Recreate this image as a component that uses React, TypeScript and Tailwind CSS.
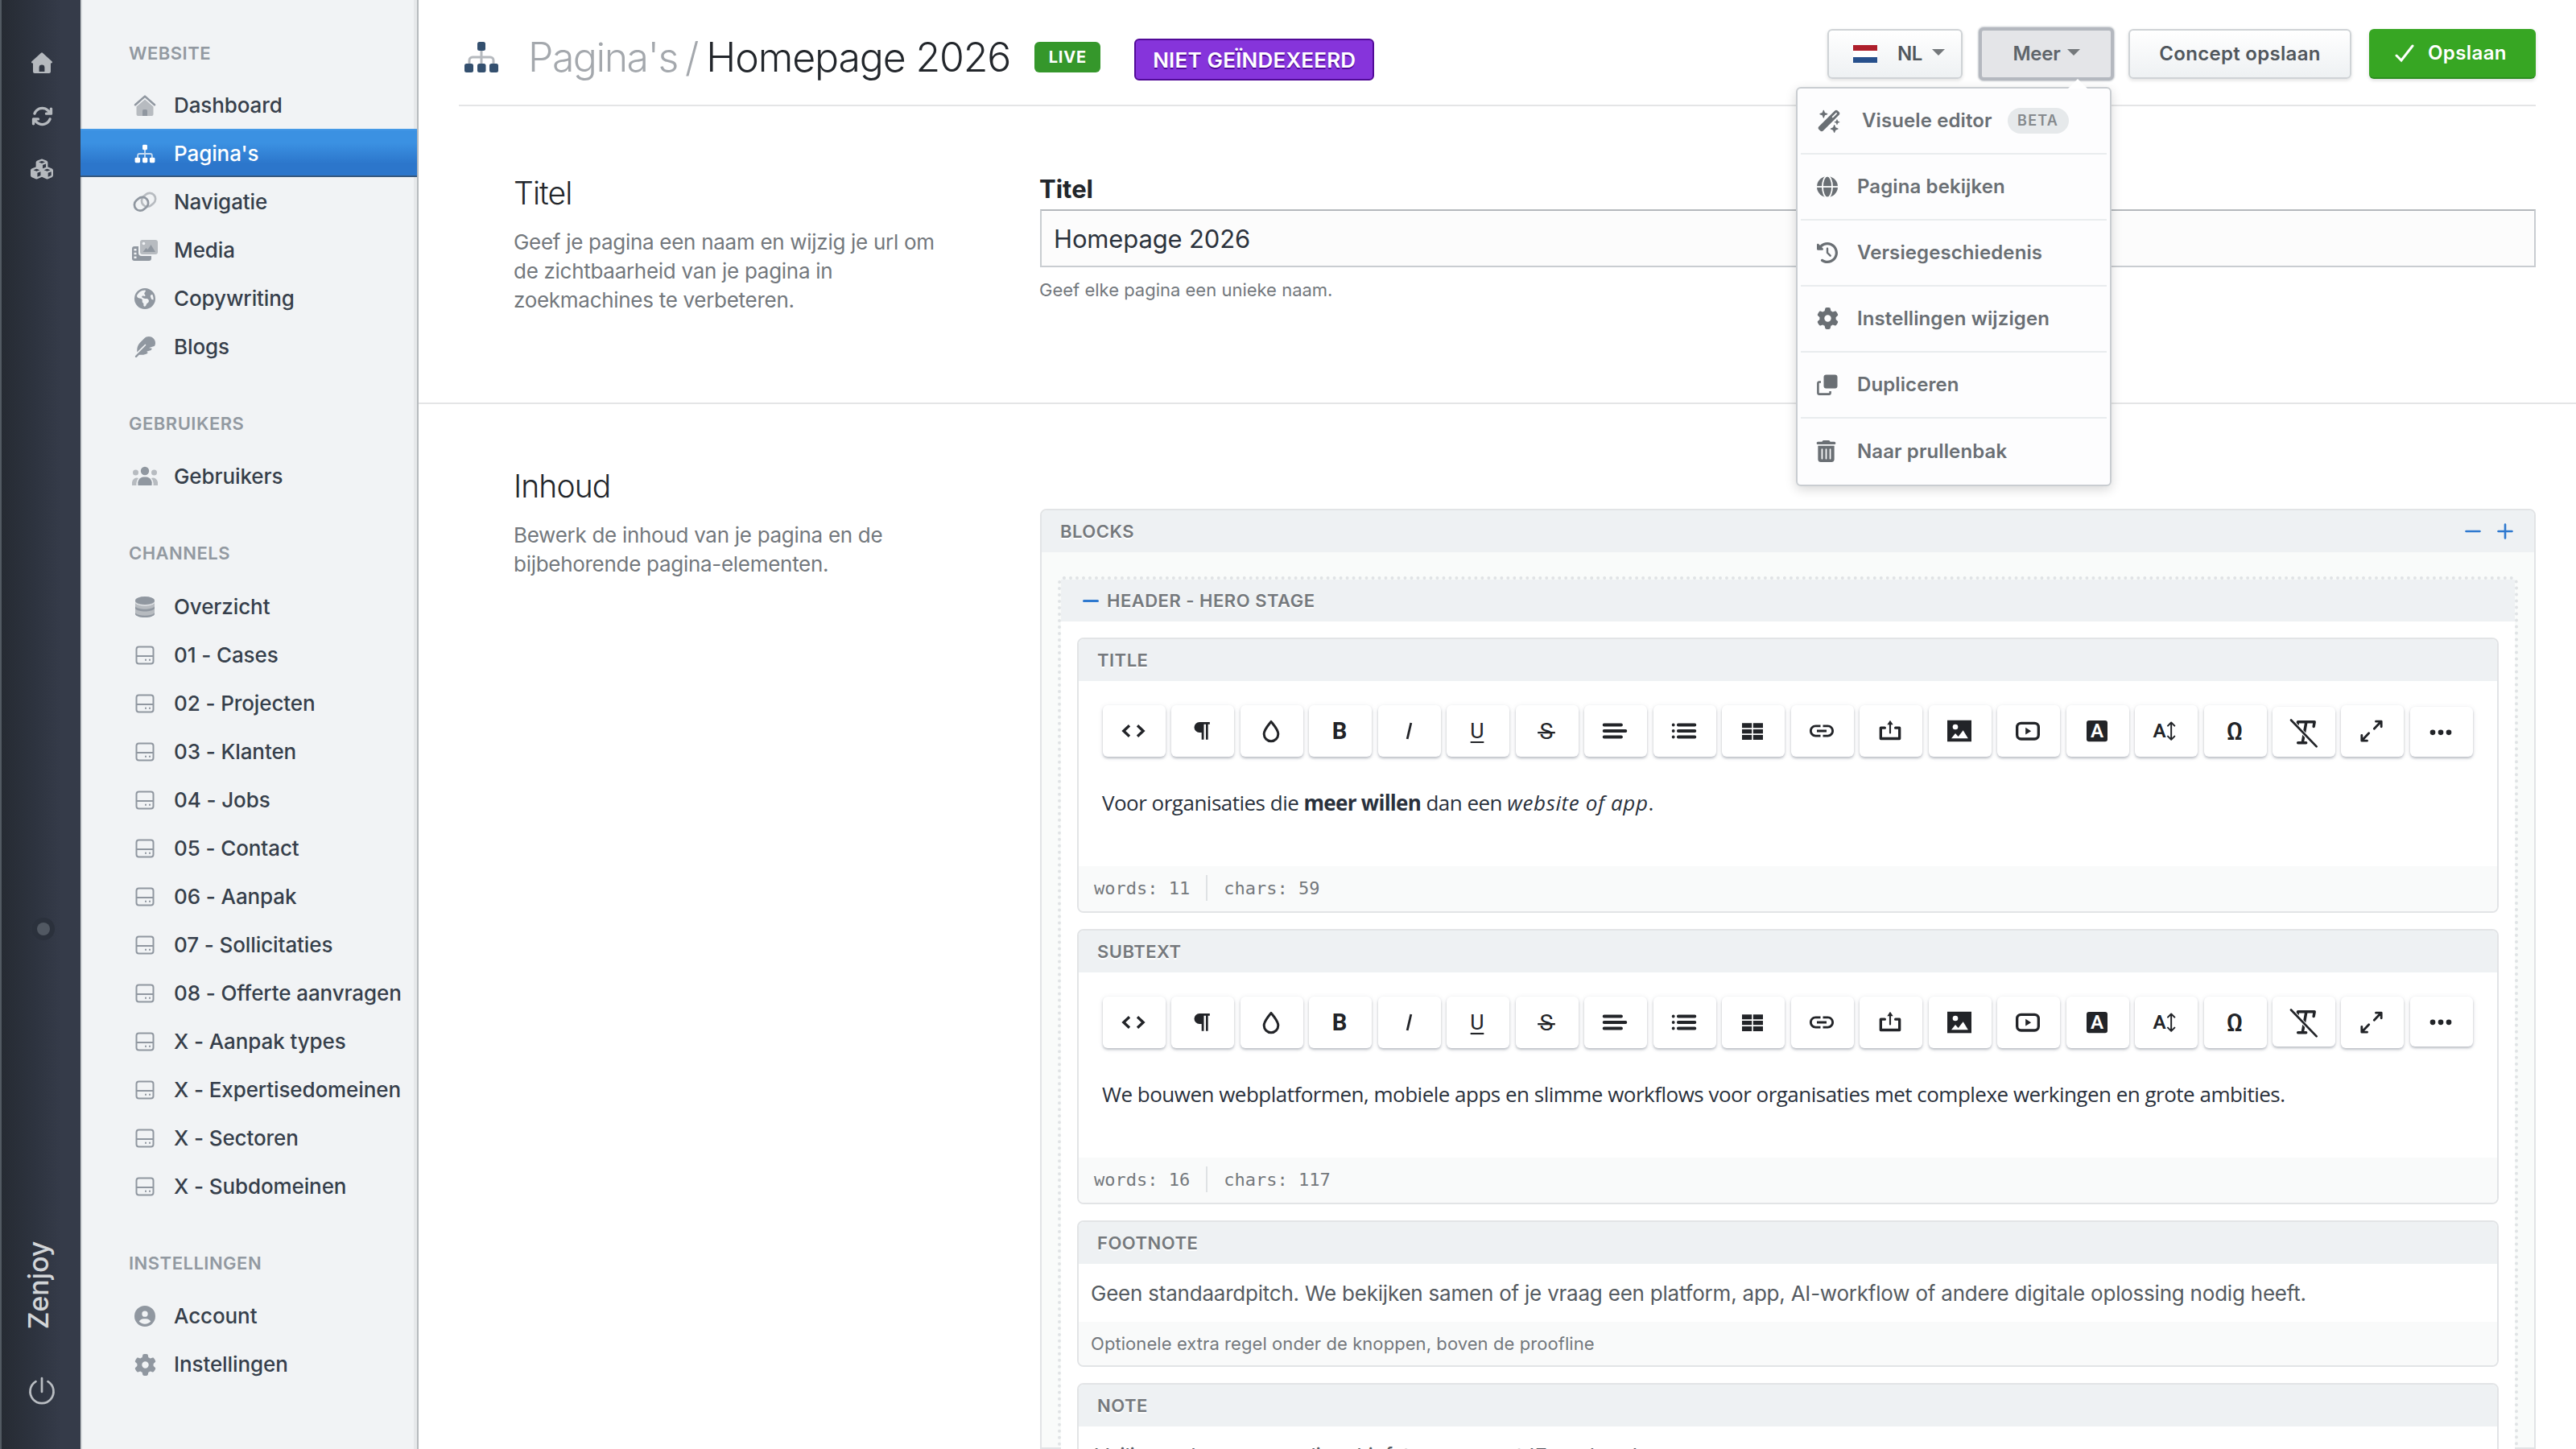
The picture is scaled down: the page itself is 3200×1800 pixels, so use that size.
import React from 'react';
import {
    FaArrowsRotate,
    FaCircleUser,
    FaClockRotateLeft,
    FaCubes,
    FaEarthAmericas,
    FaFeather,
    FaGear,
    FaTrashCan,
    FaWandMagicSparkles,
} from 'react-icons/fa6';
import { MdLink } from 'react-icons/md';

interface NavItem {
    label: string;
    icon: React.ReactElement;
    active?: boolean;
}

interface NavSection {
    title: string;
    items: NavItem[];
}

// ---------- Sidebar icons ----------

const HouseIcon: React.FC = () => (
    <svg viewBox="0 0 28 28" className="size-7" fill="none">
        <path d="M14 6.500 24.500 15.600V25a2 2 0 0 1-2 2h-17a2 2 0 0 1-2-2v-9.400z" fill="#b7bbc0" />
        <path d="M2 13.200 14 2.600l12 10.600" stroke="#9097a0" strokeWidth="2.600" strokeLinecap="round" strokeLinejoin="round" />
        <path d="M11 27v-6.500a1.500 1.500 0 0 1 1.500-1.500h3a1.500 1.500 0 0 1 1.500 1.500V27z" fill="#9097a0" />
    </svg>
);

const SitemapIcon: React.FC<{ className: string; box: string; line: string }> = ({ className, box, line }) => (
    <svg viewBox="0 0 44 40" className={className} fill="none">
        <path d="M22 10v18M7 29v-5a4 4 0 0 1 4-4h22a4 4 0 0 1 4 4v5" stroke={line} strokeWidth="3" />
        <rect x="17" y="1" width="10" height="11" rx="2.500" fill={box} />
        <rect x="1" y="28" width="11" height="11" rx="2.500" fill={box} />
        <rect x="17" y="28" width="10.500" height="11" rx="2.500" fill={box} />
        <rect x="32" y="28" width="11" height="11" rx="2.500" fill={box} />
    </svg>
);

const RingsIcon: React.FC = () => (
    <svg viewBox="0 0 30 26" className="h-[26px] w-[30px]" fill="none" strokeWidth="2.700">
        <rect x="10.500" y="3" width="18" height="14.500" rx="7.200" transform="rotate(-42 19.500 10.200)" stroke="#b7bbc0" />
        <rect x="1.500" y="8" width="18" height="14.500" rx="7.200" transform="rotate(-42 10.500 15.200)" stroke="#9097a0" />
    </svg>
);

const MediaIcon: React.FC = () => (
    <svg viewBox="0 0 34 28" className="h-7 w-[34px]">
        <path d="M4 9h5v8a4 4 0 0 0 4 4h12v3a3 3 0 0 1-3 3H4a3 3 0 0 1-3-3V12a3 3 0 0 1 3-3z" fill="#9097a0" />
        <path d="M3.500 12h3v2.500h-3zM3.500 16.800h3v2.500h-3zM3.500 21.500h3V24h-3z" fill="#f1f3f5" />
        <rect x="11" y="1" width="22" height="18" rx="3" fill="#b7bbc0" />
        <circle cx="15.500" cy="5.500" r="1.800" fill="#f1f3f5" />
        <path d="m14.500 16 4-5 2 2 4-6 5.500 9z" fill="#9097a0" />
    </svg>
);

const UsersIcon: React.FC = () => (
    <svg viewBox="0 0 34 26" className="h-[26px] w-[34px]">
        <circle cx="5.500" cy="8" r="3.500" fill="#b7bbc0" />
        <circle cx="28.500" cy="8" r="3.500" fill="#b7bbc0" />
        <path d="M1 24v-4a6 6 0 0 1 8-5 12 12 0 0 0-2.500 9zM33 24v-4a6 6 0 0 0-8-5 12 12 0 0 1 2.500 9z" fill="#b7bbc0" />
        <circle cx="17" cy="6" r="5.200" fill="#9097a0" />
        <path d="M8.500 24a8 8 0 0 1 7-10.500h3A8 8 0 0 1 25.500 24z" fill="#9097a0" />
    </svg>
);

const DatabaseIcon: React.FC = () => (
    <svg viewBox="0 0 26 28" className="h-7 w-[26px]">
        <path d="M1 6v16c0 2.800 5.400 5 12 5s12-2.200 12-5V6z" fill="#b7bbc0" />
        <ellipse cx="13" cy="6" rx="12" ry="5" fill="#9097a0" />
        <path d="M1 13.500c2 2 6.500 3.200 12 3.200s10-1.200 12-3.200v2.800c-2 2-6.500 3.200-12 3.200S3 18.300 1 16.300z" fill="#9097a0" />
        <path d="M1 21.500c2 2 6.500 3.200 12 3.200s10-1.200 12-3.200V23c-1 2.500-6 4-12 4S2 25.500 1 23z" fill="#9097a0" />
        <path d="M1 8.500c2 2.400 6.500 3.600 12 3.600s10-1.200 12-3.600" stroke="#f1f3f5" strokeWidth="1" fill="none" />
    </svg>
);

const DriveIcon: React.FC = () => (
    <svg viewBox="0 0 24 24" className="size-6" fill="none" stroke="#9097a0">
        <rect x="1.500" y="1.500" width="21" height="21" rx="3" strokeWidth="2" />
        <path d="M1.500 13h21" strokeWidth="2" />
        <path d="M12 17.800h2M17 17.800h2" strokeWidth="2" />
    </svg>
);

const channels = [
    '01 - Cases',
    '02 - Projecten',
    '03 - Klanten',
    '04 - Jobs',
    '05 - Contact',
    '06 - Aanpak',
    '07 - Sollicitaties',
    '08 - Offerte aanvragen',
    'X - Aanpak types',
    'X - Expertisedomeinen',
    'X - Sectoren',
    'X - Subdomeinen',
];

const sections: NavSection[] = [
    {
        title: 'WEBSITE',
        items: [
            { label: 'Dashboard', icon: <HouseIcon /> },
            { label: "Pagina's", icon: <SitemapIcon className="h-6 w-[26px]" box="#ffffff" line="#c5dbf2" />, active: true },
            { label: 'Navigatie', icon: <RingsIcon /> },
            { label: 'Media', icon: <MediaIcon /> },
            { label: 'Copywriting', icon: <FaEarthAmericas className="size-[26px]" /> },
            { label: 'Blogs', icon: <FaFeather className="size-[26px]" /> },
        ],
    },
    { title: 'GEBRUIKERS', items: [{ label: 'Gebruikers', icon: <UsersIcon /> }] },
    {
        title: 'CHANNELS',
        items: [
            { label: 'Overzicht', icon: <DatabaseIcon /> },
            ...channels.map(label => ({ label, icon: <DriveIcon /> })),
        ],
    },
    {
        title: 'INSTELLINGEN',
        items: [
            { label: 'Account', icon: <FaCircleUser className="size-[26px]" /> },
            { label: 'Instellingen', icon: <FaGear className="size-[27px]" /> },
        ],
    },
];

// ---------- Editor toolbar icons ----------

const Glyph: React.FC<{ children: React.ReactNode }> = ({ children }) => (
    <svg
        viewBox="0 0 24 24"
        className="size-10 overflow-visible"
        fill="none"
        stroke="#222428"
        strokeWidth="2"
        strokeLinecap="round"
        strokeLinejoin="round"
    >
        {children}
    </svg>
);

const letter = 'fill-[#222428] stroke-none font-[Roboto]';

const tools: React.ReactElement[] = [
    <Glyph><path d="M9 8 4.700 12 9 16M15 8l4.300 4-4.300 4" strokeLinecap="butt" strokeLinejoin="miter" /></Glyph>,
    <Glyph><path d="M17.900 5.400V7h-1.300v11.500H15V7h-1.500v11.500h-1.700v-5.300h-1.600a3.900 3.900 0 0 1 0-7.800z" fill="#222428" stroke="none" /></Glyph>,
    <Glyph><path d="M12 5c2.400 3 5.300 6.200 5.300 9.300a5.300 5.300 0 0 1-10.600 0C6.700 11.200 9.600 8 12 5z" strokeWidth="1.800" /></Glyph>,
    <Glyph><text x="12" y="18.300" textAnchor="middle" fontSize="17.500" fontWeight="700" className={letter}>B</text></Glyph>,
    <Glyph><path d="m13.700 6-2.800 12" strokeWidth="1.700" strokeLinecap="butt" /></Glyph>,
    <Glyph>
        <text x="12" y="17.300" textAnchor="middle" fontSize="16" className={letter}>U</text>
        <path d="M7 20.400h10" strokeWidth="1.300" strokeLinecap="butt" />
    </Glyph>,
    <Glyph>
        <text x="12" y="18.200" textAnchor="middle" fontSize="17" className={letter}>S</text>
        <path d="M5.500 13.300h13" strokeWidth="1.400" strokeLinecap="butt" />
    </Glyph>,
    <Glyph><path d="M4 7.500h12.800M4 12h16M4 16.500h12.800" strokeWidth="2.300" /></Glyph>,
    <Glyph><path d="M7.700 7.500H20M7.700 12H20M7.700 16.500H20M4 7.500h.01M4 12h.01M4 16.500h.01" strokeWidth="2.300" /></Glyph>,
    <Glyph><path d="M4.200 6.200h7.300v3.600H4.200zM12.500 6.200h7.300v3.600h-7.300zM4.200 10.800h7.300v3.200H4.200zM12.500 10.800h7.300v3.200h-7.300zM4.200 15h7.300v3.600H4.200zM12.500 15h7.300v3.600h-7.300z" fill="#222428" stroke="none" /></Glyph>,
    <MdLink className="size-9 text-[#222428]" />,
    <Glyph>
        <path d="M8 9.700H5v8h14v-8h-3" />
        <path d="M12 13.500V6" strokeWidth="1.300" />
        <path d="m12 4-2.200 3.300h4.400z" fill="#222428" stroke="none" />
    </Glyph>,
    <Glyph>
        <path d="M3 4h18v16H3z" fill="#222428" stroke="none" />
        <circle cx="9" cy="9" r="2" fill="#fff" stroke="none" />
        <path d="m6 17.500 3-3.700 2.200 2.400 3.600-4.700 3.700 6z" fill="#fff" stroke="none" />
    </Glyph>,
    <Glyph>
        <rect x="4" y="6.200" width="16" height="11.800" rx="3" />
        <path d="M10.300 9.500v5.200l4.200-2.600z" fill="#222428" stroke="none" />
    </Glyph>,
    <Glyph>
        <rect x="4.200" y="4.200" width="15.600" height="15.800" rx="1.800" fill="#222428" stroke="none" />
        <text x="12" y="17" textAnchor="middle" fontSize="14.500" fontWeight="600" className="fill-white stroke-none font-[Roboto]">A</text>
    </Glyph>,
    <Glyph>
        <text x="7.500" y="16.800" textAnchor="middle" fontSize="14.500" fontWeight="600" className={letter}>A</text>
        <path d="M16.300 5.800v12.600M13.800 8.200l2.500-2.500 2.500 2.500M13.800 16l2.500 2.500 2.500-2.500" strokeWidth="1.200" />
    </Glyph>,
    <Glyph><text x="12" y="18.500" textAnchor="middle" fontSize="18.500" fontWeight="500" className={letter}>Ω</text></Glyph>,
    <Glyph>
        <path d="m7.700 7.500.4-2.800h12.400l-.6 3.400M14.300 4.900l-2.700 15M8.200 20.200h6" strokeWidth="2.100" />
        <path d="M3.400 3.700 22 23.300" stroke="#fff" strokeWidth="2.800" />
        <path d="M3 3.300 22 23" strokeWidth="1.600" />
    </Glyph>,
    <Glyph><path d="m14 10.300 4.800-5M15.300 4.900h4v4M10 13.700l-4.800 5M8.700 19.300h-4v-4" strokeWidth="1.700" /></Glyph>,
    <Glyph><path d="M6 12.500h.01M12 12.500h.01M18 12.500h.01" strokeWidth="4" /></Glyph>,
];

// ---------- Menu ----------

const GlobeIcon: React.FC = () => (
    <svg viewBox="0 0 26 26" className="size-[26px]" fill="none">
        <circle cx="13" cy="13" r="13" fill="#6a6f74" />
        <ellipse cx="13" cy="13" rx="6" ry="13.500" stroke="#fff" strokeWidth="1.800" />
        <path d="M0 13h26" stroke="#fff" strokeWidth="1.800" />
    </svg>
);

const CopyIcon: React.FC = () => (
    <svg viewBox="0 0 26 26" className="size-[26px]" fill="none">
        <rect x="8.500" y="0.500" width="17" height="17" rx="3" fill="#6a6f74" />
        <path d="M5 9.500H3A1.600 1.600 0 0 0 1.400 11v12A1.600 1.600 0 0 0 3 24.600h12a1.600 1.600 0 0 0 1.600-1.600v-2" stroke="#6a6f74" strokeWidth="2.600" />
    </svg>
);

const menuItems: { label: string; icon: React.ReactElement; beta?: boolean }[] = [
    { label: 'Visuele editor', icon: <FaWandMagicSparkles className="h-7 w-[30px] -scale-x-100 rotate-90" />, beta: true },
    { label: 'Pagina bekijken', icon: <GlobeIcon /> },
    { label: 'Versiegeschiedenis', icon: <FaClockRotateLeft className="size-[26px]" /> },
    { label: 'Instellingen wijzigen', icon: <FaGear className="size-[27px]" /> },
    { label: 'Dupliceren', icon: <CopyIcon /> },
    { label: 'Naar prullenbak', icon: <FaTrashCan className="-ml-0.5 size-[27px]" /> },
];

const Caret: React.FC = () => (
    <span className="-mt-1 border-x-8 border-t-8 border-x-transparent border-t-[#74787b]" />
);

const MoreMenu: React.FC = () => (
    <div className="absolute top-[74px] right-[3px] z-10 w-[392px] rounded-md border-2 border-[#c9cdd1] bg-[#fdfdfe] px-1 shadow-[0_4px_14px_rgba(0,0,0,0.16)]">
        <span className="absolute -top-3 right-[28px] border-x-[12px] border-b-[12px] border-x-transparent border-b-white" />
        {menuItems.map((item, i) => (
            <div
                key={item.label}
                className={`flex h-[82px] items-center pl-5 text-[#6a6f74] ${i < menuItems.length - 1 ? 'border-b-2 border-[#e9ecee]' : ''}`}
            >
                <span className="flex w-[50px] shrink-0 items-center">{item.icon}</span>
                <span className={`text-[24px] font-semibold tracking-[0.1px] whitespace-nowrap ${item.beta ? 'pl-1.5' : ''}`}>{item.label}</span>
                {item.beta && (
                    <span className="ml-[19px] flex h-8 w-[76px] items-center justify-center rounded-full bg-[#e6e9eb] text-[18px] font-semibold tracking-[1.2px] text-[#85898d]">
                        BETA
                    </span>
                )}
            </div>
        ))}
    </div>
);

// ---------- Layout ----------

const Rail: React.FC = () => (
    <div className="flex w-[100px] shrink-0 flex-col items-center border-l-2 border-[#525a62] bg-linear-to-r from-[#262b33] via-[#2e3440] via-45% to-[#353b49] to-75% pt-[64px] text-[#b5b9be]">
        <svg viewBox="0 0 28 28" className="ml-0.5 size-7" fill="currentColor">
            <path d="M13 1.700a1.500 1.500 0 0 1 2 0l11.500 10.600c1 1 .5 2.200-.8 2.200H25v10.500a2 2 0 0 1-2 2H5a2 2 0 0 1-2-2V14.500h-.7c-1.300 0-1.800-1.200-.8-2.200zM10.600 20v5h6.800v-5a3.400 3.400 0 0 0-6.800 0z" />
        </svg>
        <FaArrowsRotate className="mt-[39px] ml-0.5 size-[27px]" />
        <FaCubes className="mt-[38px] ml-0.5 size-7" />
        <div className="mt-[916px] ml-1.5 size-7 rounded-full bg-[#2b313c] p-1.5">
            <div className="size-4 rounded-full bg-[#515862]" />
        </div>
        <div className="mt-[373px] flex h-[110px] w-12 items-center justify-center pr-[6px]">
            <span className="-rotate-90 text-[34px] font-medium tracking-[-0.1px] text-[#d2d5d8]">Zenjoy</span>
        </div>
        <svg viewBox="0 0 34 36" className="mt-[59px] ml-0.5 h-9 w-[34px]" fill="none" stroke="#b9bdc2" strokeWidth="2.700" strokeLinecap="round">
            <path d="M17 2v17M9.500 6.200a14.500 14.500 0 1 0 15 0" />
        </svg>
    </div>
);

const Sidebar: React.FC = () => (
    <div className="flex w-[420px] shrink-0 flex-col border-r-2 border-l-2 border-r-[#b7bbbe] border-l-[#d3d6d9] bg-[#f1f3f5] shadow-[inset_-4px_0_0_#e6e8ea]">
        {sections.map((section, i) => (
            <div key={section.title}>
                <div className={`flex items-end pl-[58px] ${i === 0 ? 'h-[100px] pb-[22px]' : 'h-[101.500px] pb-6'}`}>
                    <h3 className="text-[22px] leading-6 font-semibold tracking-[0.5px] text-[#9299a1]">{section.title}</h3>
                </div>
                {section.items.map(item => (
                    <div
                        key={item.label}
                        className={
                            item.active
                                ? '-ml-0.5 flex h-[60px] items-center border-b-2 border-[#35587f] bg-linear-to-b from-[#3b91e2] from-30% to-[#2c76cb] to-75% pt-[3px] pl-0.5 text-white shadow-[inset_0_2px_0_#4599e6]'
                                : 'flex h-[60px] items-center pt-px text-[#363f4b]'
                        }
                    >
                        <span className={`ml-[58px] flex w-10 justify-center ${item.active ? '' : 'text-[#9097a0]'}`}>{item.icon}</span>
                        <span className="ml-[16px] text-[26px] leading-none font-[450] tracking-[-0.1px] whitespace-nowrap">{item.label}</span>
                    </div>
                ))}
            </div>
        ))}
    </div>
);

const lightButton =
    'flex h-[62px] items-center rounded-md border-2 border-[#cfd3d6] bg-linear-to-b from-white to-[#eef1f3] text-[24px] font-semibold text-[#51575d] shadow-[0_2px_4px_rgba(0,0,0,0.12)]';

const Header: React.FC = () => (
    <div className="mx-[50px] flex h-[132px] items-center justify-between border-b-2 border-[#e4e5e6]">
        <div className="flex items-center pt-[11px] pl-[5px]">
            <SitemapIcon className="h-10 w-[46px]" box="#34506f" line="#b5b9be" />
            <h1 className="ml-[35px] flex text-[50px] leading-[60px] font-light whitespace-nowrap">
                <span className="tracking-[-1.500px] text-[#a4a8ad]">Pagina's</span>
                <span className="ml-[9px] text-[#a4a8ad]">/</span>
                <span className="ml-[9px] font-[350] tracking-[-1.150px] text-[#22262b]">Homepage 2026</span>
            </h1>
            <span className="ml-[30px] flex h-[38px] w-[82px] items-center justify-center rounded-md bg-[#35972b] text-[20px] font-bold tracking-[0.800px] text-white">
                LIVE
            </span>
            <span className="mt-[7px] ml-[42px] flex h-[52px] w-[298px] items-center justify-center rounded-md border-2 border-[#520a98] bg-[#8634db] text-[26px] font-semibold tracking-[0.200px] text-white [text-shadow:0_2px_0_#520a98]">
                NIET GEÏNDEXEERD
            </span>
        </div>
        <div className="flex items-center pt-[3px]">
            <button className={`${lightButton} w-[168px] pl-[30px]`}>
                <span className="flex h-[22px] w-[30px] flex-col">
                    <span className="h-[7px] bg-[#ae1f2b]" />
                    <span className="h-2 bg-white" />
                    <span className="h-[7px] bg-[#27508c]" />
                </span>
                <span className="mr-3 ml-[25px] tracking-[-0.500px]">NL</span>
                <Caret />
            </button>
            <div className="relative ml-[20px]">
                <button className="flex h-[66px] w-[168px] items-center justify-center gap-2 rounded-md border-4 border-[#b4b8bf] bg-[#e4e5e8] text-[24px] font-semibold text-[#5f656b] shadow-[0_0_2px_1px_#c9cdd1]">
                    <span className="tracking-[-0.200px]">Meer</span>
                    <Caret />
                </button>
                <MoreMenu />
            </div>
            <button className={`${lightButton} ml-[18px] w-[277px] justify-center tracking-[0.300px]`}>Concept opslaan</button>
            <button className="ml-[22px] flex h-[62px] w-[207px] items-center rounded-md border-b-2 border-[#2c8f1f] bg-[#37a623] pl-[32px] text-[24px] font-semibold text-white shadow-[0_2px_4px_rgba(0,0,0,0.15)]">
                <svg viewBox="0 0 24 24" className="size-6" fill="none" stroke="#fff" strokeWidth="3" strokeLinecap="round">
                    <path d="m2 15 6 6L22 3" />
                </svg>
                <span className="ml-[17px] tracking-[0.400px]">Opslaan</span>
            </button>
        </div>
    </div>
);

const SectionIntro: React.FC<{ title: string; lines: string[]; className: string }> = ({ title, lines, className }) => (
    <div className={`w-[772px] shrink-0 pl-[118px] ${className}`}>
        <h2 className="text-[39px] leading-10 font-light tracking-[-0.900px] text-[#22262b]">{title}</h2>
        <p className="mt-[23px] text-[26px] leading-9 tracking-[-0.290px] whitespace-nowrap text-[#73787d]">
            {lines.map(line => <span key={line} className="block">{line}</span>)}
        </p>
    </div>
);

const heading = 'text-[22px] font-semibold tracking-[0.500px] text-[#75797d] [text-shadow:0_2px_0_#fff]';

const Panel: React.FC<{ title: string; children: React.ReactNode }> = ({ title, children }) => (
    <div className="shrink-0 overflow-hidden rounded-lg border-2 border-[#e2e4e6] bg-white">
        <div className={`flex h-[52px] items-center bg-[#eef1f3] pl-[23px] ${heading}`}>{title}</div>
        {children}
    </div>
);

interface EditorPanelProps {
    title: string;
    words: number;
    chars: number;
    align: string;
    children: React.ReactNode;
}

const EditorPanel: React.FC<EditorPanelProps> = ({ title, words, chars, align, children }) => (
    <Panel title={title}>
        <div className="h-[230px] px-[30px] pt-[30px]">
            <div className={`flex h-16 justify-between ${align}`}>
                {tools.map((tool, i) => (
                    <button
                        key={i}
                        className={`flex w-[78px] items-center justify-center rounded-md bg-white pr-0.5 pb-px shadow-[0_2px_3px_rgba(60,70,90,0.3),0_1px_6px_rgba(60,70,90,0.1)] ${i === 17 || i === 19 ? 'h-[62px]' : 'h-16'}`}
                    >
                        {tool}
                    </button>
                ))}
            </div>
            <p className="mt-[37px] -ml-px font-['Trebuchet_MS','Open_Sans',sans-serif] text-[26px] leading-10 tracking-[-0.510px] whitespace-nowrap text-[#2a313c]">
                {children}
            </p>
        </div>
        <div className="flex h-14 items-center bg-[#f9fafa] pb-0.5 pl-[19px] font-['DejaVu_Sans_Mono',monospace] text-[22px] text-[#74787c]">
            <span>words: {words}</span>
            <span className="mx-[20px] h-8 w-0.5 bg-[#dfe2e4]" />
            <span>chars: {chars}</span>
        </div>
    </Panel>
);

const Blocks: React.FC = () => (
    <div className="mt-[130px] mr-[50px] flex-1 rounded-t-lg border-2 border-[#e2e4e6] bg-[#f9fbfa]">
        <div className={`flex h-[52px] items-center justify-between rounded-t-md bg-[#eef1f3] pr-[26px] pl-[23px] ${heading}`}>
            BLOCKS
            <svg viewBox="0 0 60 20" className="h-5 w-[60px]" fill="none" stroke="#2e79cf" strokeWidth="2.600" strokeLinecap="round">
                <path d="M1.500 10h17M41.500 10h17M50 1.500v17" />
            </svg>
        </div>
        <div className="mx-5 mt-[30px] h-[1200px] rounded-lg border-4 border-dotted border-[#e0e3e5] bg-white bg-clip-padding">
            <div className={`flex h-[52px] items-center bg-[#eef1f3] pl-[27px] ${heading}`}>
                <span className="mr-[10px] h-[3px] w-5 rounded-full bg-[#2e79cf]" />
                HEADER - HERO STAGE
            </div>
            <div className="flex flex-col gap-5 p-5">
                <EditorPanel title="TITLE" words={11} chars={59} align="items-end">
                    Voor organisaties die <strong className="font-bold tracking-[-0.7px]">meer willen</strong> dan een{' '}
                    <em className="tracking-[0.6px]">website of app</em>.
                </EditorPanel>
                <EditorPanel title="SUBTEXT" words={16} chars={117} align="items-start">
                    We bouwen webplatformen, mobiele apps en slimme workflows voor organisaties met complexe werkingen en grote ambities.
                </EditorPanel>
                <Panel title="FOOTNOTE">
                    <div className="flex h-[72px] items-center pl-[15px] text-[26px] tracking-[-0.220px] text-[#555b61]">
                        Geen standaardpitch. We bekijken samen of je vraag een platform, app, AI-workflow of andere digitale oplossing nodig heeft.
                    </div>
                    <div className="flex h-[54px] items-center bg-[#f9fafa] pt-px pl-[15px] text-[22px] tracking-[0.070px] text-[#73787d]">
                        Optionele extra regel onder de knoppen, boven de proofline
                    </div>
                </Panel>
                <Panel title="NOTE">
                    <div className="h-[72px] pt-[17px] pl-[20px] text-[26px] leading-10 tracking-[-0.210px] text-[#555b61]">
                        Veilig en duurzaam online. Liefst samen met 'Een ploeg'
                    </div>
                </Panel>
            </div>
        </div>
    </div>
);

const App: React.FC = () => (
    <div className="flex h-[1800px] w-[3200px] overflow-hidden bg-white font-[Inter,sans-serif]">
        <Rail />
        <Sidebar />
        <div className="flex min-w-0 flex-1 flex-col">
            <Header />
            <div className="flex h-[370px] shrink-0 border-b-2 border-[#e4e5e6]">
                <SectionIntro
                    title="Titel"
                    lines={['Geef je pagina een naam en wijzig je url om', 'de zichtbaarheid van je pagina in', 'zoekmachines te verbeteren.']}
                    className="pt-[88px]"
                />
                <div className="mr-[50px] flex-1 pt-[83px]">
                    <div className="-ml-px text-[31px] leading-10 font-bold text-[#22262b]">Titel</div>
                    <div className="mt-[5px] flex h-[72px] items-center border-2 border-[#c9cdd1] border-t-[#b4b8bc] bg-[#fcfcfc] pt-[2px] pl-[15px] text-[31px] tracking-[-0.140px] text-[#2c333d]">
                        Homepage 2026
                    </div>
                    <div className="mt-[14px] -ml-px text-[22px] leading-7 text-[#73787d]">Geef elke pagina een unieke naam.</div>
                </div>
            </div>
            <div className="flex h-[1298px] shrink-0 overflow-hidden">
                <SectionIntro
                    title="Inhoud"
                    lines={['Bewerk de inhoud van je pagina en de', 'bijbehorende pagina-elementen.']}
                    className="pt-[82px]"
                />
                <Blocks />
            </div>
        </div>
    </div>
);

export default App;
